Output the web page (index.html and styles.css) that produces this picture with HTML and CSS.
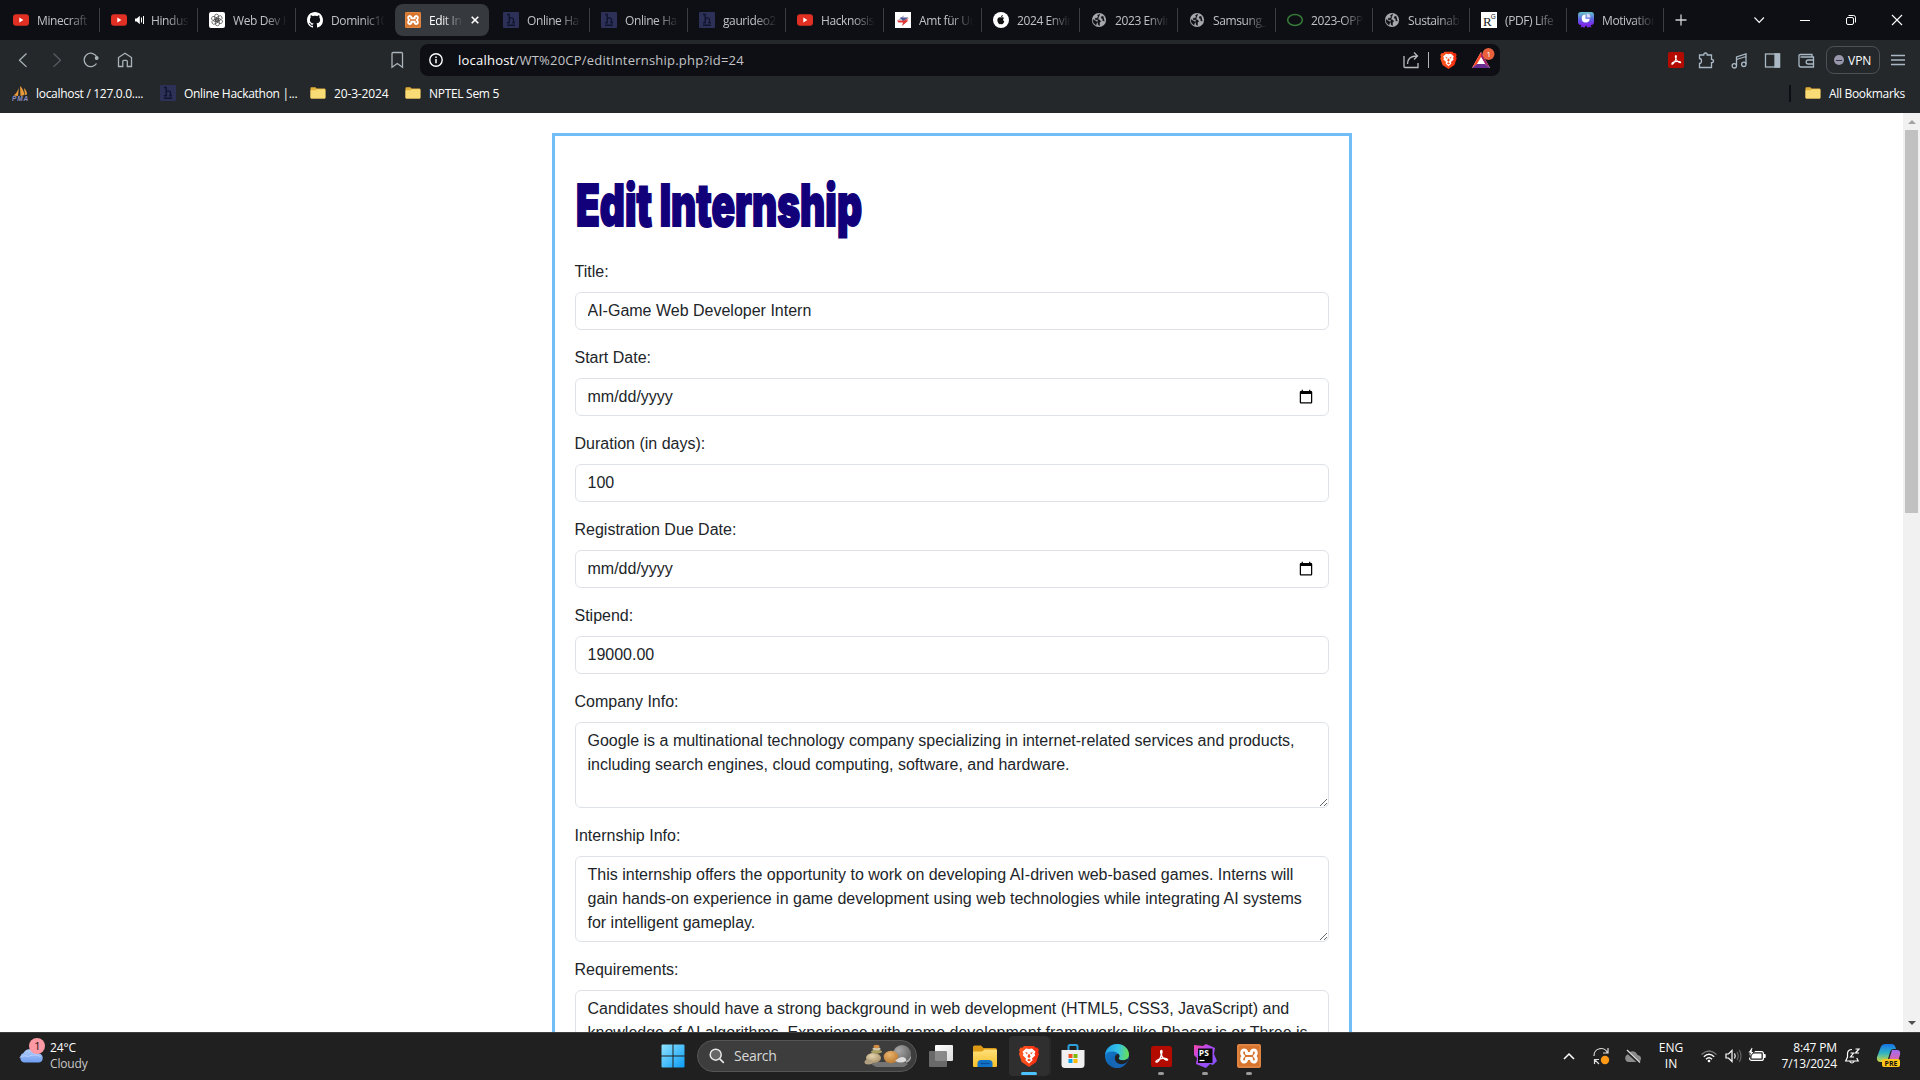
FILE: index.html
```
<!DOCTYPE html>
<html lang="en-US">
<head>
<meta charset="utf-8">
<title>Edit Internship</title>
<link rel="stylesheet" href="styles.css">
</head>
<body>
<svg class="defs" width="0" height="0">
  <defs>
    <linearGradient id="gWin" x1="0" y1="0" x2="1" y2="1"><stop offset="0" stop-color="#8fe3ff"/><stop offset="1" stop-color="#0a9bf5"/></linearGradient>
    <linearGradient id="gFold" x1="0" y1="0" x2="0" y2="1"><stop offset="0" stop-color="#ffe07a"/><stop offset="1" stop-color="#f6bf28"/></linearGradient>
    <linearGradient id="gEdge" x1="0" y1="0.2" x2="1" y2="0.3"><stop offset="0" stop-color="#1b9de2"/><stop offset=".55" stop-color="#35c1e8"/><stop offset="1" stop-color="#66df58"/></linearGradient>
    <linearGradient id="gEdge2" x1="0" y1="0" x2="1" y2="1"><stop offset="0" stop-color="#1683d4"/><stop offset="1" stop-color="#0c4a94"/></linearGradient>
    <linearGradient id="gPs" x1="0" y1="0" x2="1" y2="1"><stop offset="0" stop-color="#ff45a5"/><stop offset=".4" stop-color="#b04cf2"/><stop offset="1" stop-color="#7b52ff"/></linearGradient>
    <linearGradient id="gMot" x1="0" y1="0" x2="0" y2="1"><stop offset="0" stop-color="#68c5cb"/><stop offset=".6" stop-color="#5a5ce0"/><stop offset="1" stop-color="#8226ef"/></linearGradient>
    <linearGradient id="gCop1" x1="0" y1="0" x2="0" y2="1"><stop offset="0" stop-color="#1672e8"/><stop offset=".5" stop-color="#2fb4c4"/><stop offset="1" stop-color="#d8d936"/></linearGradient>
    <linearGradient id="gCop2" x1="0" y1="0" x2="0" y2="1"><stop offset="0" stop-color="#a16bf3"/><stop offset="1" stop-color="#f4638b"/></linearGradient>
    <linearGradient id="gCloud" x1="0" y1="0" x2="0" y2="1"><stop offset="0" stop-color="#b4cffa"/><stop offset="1" stop-color="#6f9df0"/></linearGradient>
    <linearGradient id="gTv" x1="0" y1="0" x2="1" y2="1"><stop offset="0" stop-color="#fff"/><stop offset="1" stop-color="#dcdcdc"/></linearGradient>
    <linearGradient id="gBrave" x1="0" y1="0" x2="1" y2="0"><stop offset="0" stop-color="#ff5a1f"/><stop offset="1" stop-color="#f4280f"/></linearGradient>
    <radialGradient id="gRock" cx=".4" cy=".3" r=".8"><stop offset="0" stop-color="#e4d3ae"/><stop offset="1" stop-color="#a28c63"/></radialGradient>
    <radialGradient id="gRock2" cx=".4" cy=".3" r=".8"><stop offset="0" stop-color="#e9b36b"/><stop offset="1" stop-color="#b5742d"/></radialGradient>
    <radialGradient id="gRock3" cx=".3" cy=".3" r=".8"><stop offset="0" stop-color="#a8a8a8"/><stop offset="1" stop-color="#626262"/></radialGradient>
  </defs>
  <symbol id="yt" viewBox="0 0 16 16"><rect x="0" y="2.2" width="16" height="11.6" rx="3" fill="#e13023"/><path d="M6.3 5.6v4.8L10.4 8z" fill="#fff"/></symbol>
  <symbol id="gpt" viewBox="0 0 16 16"><rect width="16" height="16" rx="2" fill="#fff"/><g fill="none" stroke="#333" stroke-width=".6"><rect x="5.600" y="2.200" width="4" height="7" rx="2"/><rect x="5.600" y="2.200" width="4" height="7" rx="2" transform="rotate(60 8 8)"/><rect x="5.600" y="2.200" width="4" height="7" rx="2" transform="rotate(120 8 8)"/><rect x="5.600" y="2.200" width="4" height="7" rx="2" transform="rotate(180 8 8)"/><rect x="5.600" y="2.200" width="4" height="7" rx="2" transform="rotate(240 8 8)"/><rect x="5.600" y="2.200" width="4" height="7" rx="2" transform="rotate(300 8 8)"/></g></symbol>
  <symbol id="gh" viewBox="0 0 16 16"><path fill="#fff" d="M8 0C3.58 0 0 3.58 0 8c0 3.54 2.29 6.53 5.47 7.59.4.07.55-.17.55-.38 0-.19-.01-.82-.01-1.49-2.01.37-2.53-.49-2.69-.94-.09-.23-.48-.94-.82-1.13-.28-.15-.68-.52-.01-.53.63-.01 1.08.58 1.23.82.72 1.21 1.87.87 2.33.66.07-.52.28-.87.51-1.07-1.78-.2-3.64-.89-3.64-3.95 0-.87.31-1.59.82-2.15-.08-.2-.36-1.02.08-2.12 0 0 .67-.21 2.2.82.64-.18 1.32-.27 2-.27s1.36.09 2 .27c1.53-1.04 2.2-.82 2.2-.82.44 1.1.16 1.92.08 2.12.51.56.82 1.27.82 2.15 0 3.07-1.87 3.75-3.65 3.95.29.25.54.73.54 1.48 0 1.07-.01 1.93-.01 2.2 0 .21.15.46.55.38A8.01 8.01 0 0 0 16 8c0-4.42-3.58-8-8-8z"/></symbol>
  <symbol id="xampp" viewBox="0 0 24 24"><rect width="24" height="24" rx="2" fill="#d8752f"/><rect x="1" y="1" width="22" height="22" rx="1" fill="none" stroke="#ec9a5c" stroke-width=".8"/><path d="M8 6.2C4.500 5 3.500 10 6.500 12 3.500 14 4.500 19 8 17.800c2 -.8 1.500-3.300 1.500-3.300h5s-.5 2.500 1.500 3.300c3.500 1.200 4.500-3.800 1.500-5.800 3-2 2-7-1.500-5.800-2 .8-1.500 3.300-1.500 3.300h-5s.5-2.500-1.500-3.300z" fill="none" stroke="#fff" stroke-width="2.900" stroke-linejoin="round"/></symbol>
  <symbol id="he" viewBox="0 0 16 16"><rect width="16" height="16" rx="1" fill="#2d3157"/><path d="M4 2.500h2.200V11M6.200 7c1-1.600 4.300-1.600 4.300.8V11M4 10.800h2.800M9.300 10.800H12M4 13.300h8" fill="none" stroke="#11142e" stroke-width="1.400"/></symbol>
  <symbol id="amt" viewBox="0 0 16 16"><rect width="16" height="16" fill="#fff"/><path d="M9.500 3 2.500 8.500 7 7z" fill="#8e8aa8"/><path d="M5 5.500h8.500L8 9.500z" fill="#4c5795"/><path d="M14 6 9 8.500H2l1.500 2H8L7 14l6.500-5.500h-2z" fill="#df3733"/></symbol>
  <symbol id="apple" viewBox="0 0 16 16"><circle cx="8" cy="8" r="8" fill="#fff"/><path d="M8.100 5.600c1.200-.7 2.400-.3 3 .5-1.400 1-1.200 2.800.2 3.500-.5 1.500-1.400 2.600-2.200 2.600-.5 0-.7-.3-1.200-.3s-.8.300-1.200.3C5.300 12.200 3.500 8.300 4.900 6.300c.8-1.100 2-1.200 3.200-.7zM8 5.100c0-1.100.7-2 1.800-2.200.1 1.200-.7 2.200-1.800 2.200z" fill="#111"/></symbol>
  <symbol id="globe" viewBox="0 0 16 16"><circle cx="8" cy="8" r="7.100" fill="#a5a8ac"/><path d="M9 2 6.500 3.500 7.500 5 6 6.200H4.300v1.500h4l1.500 1.600-1.300 1.200v3L7 12.500v-2L2 7.500c-.3 3 1.500 4.800 3.200 5.600M12.300 4.200l-2 .6v1.400l1.500.5v2l1.700.3" fill="#0f1016" stroke="#0f1016" stroke-width=".5"/></symbol>
  <symbol id="ring" viewBox="0 0 16 16"><ellipse cx="8" cy="8" rx="7.300" ry="5.400" fill="none" stroke="#377b38" stroke-width="1.500"/></symbol>
  <symbol id="rg" viewBox="0 0 16 16"><rect width="16" height="16" fill="#fff"/><text x="2" y="13.500" font-family="Liberation Serif" font-size="13" fill="#222">R</text><text x="9.800" y="6.700" font-family="Liberation Sans" font-size="6.500" fill="#222">G</text></symbol>
  <symbol id="mot" viewBox="0 0 16 16"><path d="M4 11h8l1.500 4.500-2.500-.7-1 1.200-2-2.500L6 16l-1-1.200-2.500.7z" fill="#7b2be8"/><rect width="16" height="13" rx="3" fill="url(#gMot)"/><path d="M7.500 2.500a4 4 0 1 0 4.200 4.200H7.500z" fill="#fff"/><path d="M8.700 1.600a4 4 0 0 1 3.800 3.900H8.700z" fill="#dcd7ff"/></symbol>
  <symbol id="folder" viewBox="0 0 16 16"><path d="M.5 3.200q0-.9.900-.9h4l1.200 1.300h8q.8 0 .8.800v8.200q0 .9-.8.900H1.400q-.9 0-.9-.9z" fill="#e2b13a"/><path d="M.5 5.300h5l1.300-1.100h7.800q.8 0 .8.800v7.600q0 .9-.8.900H1.400q-.9 0-.9-.9z" fill="#f9dc76"/></symbol>
  <symbol id="pma" viewBox="0 0 16 16"><path d="M7 2c-.5 3-3 7-5.500 8.500L6 11zM8 1l.5 10 4-1C12 6.500 10.500 3 8 1zM12 3l1 7 2-.5C15 7 14 5 12 3z" fill="#e89a3a"/><text x="0" y="15.700" font-family="Liberation Sans" font-weight="700" font-style="italic" font-size="6.500" textLength="16" fill="#8d8fc4">PMA</text></symbol>
  <symbol id="brave" viewBox="0 0 20 22"><path d="M5 1h10l1.500 1.700 1.800-.2L20 5l-.8 2L20 9l-2.700 8L10 22l-7.300-5L0 9l.8-2L0 5l1.700-2.500 1.800.2z" fill="url(#gBrave)"/><path d="m10 4 3-.5 3.500 3.300-1 2 .8 1.500-3.300 3.200.6 1.700L10 18.500l-3.600-3.300.6-1.700-3.300-3.200.8-1.500-1-2L7 3.500z" fill="#fff"/><path d="m6 7 2.700.8-.8 1.600zm8 0-2.700.8.800 1.600zM9.200 9.200h1.600l.7 2.800-1.500 1-1.500-1zM8 15l2-1.200L12 15l-2 1.500z" fill="#f24a1c"/></symbol>
  <symbol id="pdf" viewBox="0 0 20 20"><rect width="20" height="20" rx="2.500" fill="#b30b00" stroke="none"/><path d="M10 4.300c-1.500 0-.8 3 .5 5.500 1.200 2.200 3.800 4 5 3.600 1.300-.7-1.300-2-4.300-1.700-3 .3-6.200 1.800-6.500 3-.2 1.200 1.800.9 3.300-1.800C9.500 10.300 11.300 4.500 10 4.300z" fill="none" stroke="#fff" stroke-width="1.300"/></symbol>
</svg>

<header class="browser">
  <nav class="tabs">
    <div class="tab"><svg class="fav"><use href="#yt"/></svg><span class="tab-name">Minecraft</span></div>
    <div class="tab"><svg class="fav"><use href="#yt"/></svg><svg class="sound" viewBox="0 0 10 10"><path d="M0 3.500h1.800L4.800.8v8.400L1.800 6.500H0z" fill="#fff"/><path d="M6.500 2.500v5M8.500 1v8" stroke="#fff" fill="none"/></svg><span class="tab-name">Hindus</span></div>
    <div class="tab"><svg class="fav"><use href="#gpt"/></svg><span class="tab-name">Web Dev H</span></div>
    <div class="tab plain"><svg class="fav"><use href="#gh"/></svg><span class="tab-name">Dominic10</span></div>
    <div class="tab active"><svg class="fav"><use href="#xampp"/></svg><span class="tab-name">Edit In</span><svg class="close" viewBox="0 0 8 8"><path d="m.7.7 6.600 6.600M7.300.7.700 7.300" stroke="#fff" stroke-width="1.600"/></svg></div>
    <div class="tab"><svg class="fav"><use href="#he"/></svg><span class="tab-name">Online Hac</span></div>
    <div class="tab"><svg class="fav"><use href="#he"/></svg><span class="tab-name">Online Hac</span></div>
    <div class="tab"><svg class="fav"><use href="#he"/></svg><span class="tab-name">gaurideo2</span></div>
    <div class="tab"><svg class="fav"><use href="#yt"/></svg><span class="tab-name">Hacknosis</span></div>
    <div class="tab"><svg class="fav"><use href="#amt"/></svg><span class="tab-name">Amt für Um</span></div>
    <div class="tab"><svg class="fav"><use href="#apple"/></svg><span class="tab-name">2024 Envir</span></div>
    <div class="tab"><svg class="fav"><use href="#globe"/></svg><span class="tab-name">2023 Envir</span></div>
    <div class="tab"><svg class="fav"><use href="#globe"/></svg><span class="tab-name">Samsung_</span></div>
    <div class="tab narrow"><svg class="fav"><use href="#ring"/></svg><span class="tab-name">2023-OPP</span></div>
    <div class="tab narrow"><svg class="fav"><use href="#globe"/></svg><span class="tab-name">Sustainabi</span></div>
    <div class="tab narrow"><svg class="fav"><use href="#rg"/></svg><span class="tab-name">(PDF) Life</span></div>
    <div class="tab narrow"><svg class="fav"><use href="#mot"/></svg><span class="tab-name">Motivation</span></div>
    <svg class="new-tab" viewBox="0 0 12 12"><path d="M6 .5v11M.5 6h11" stroke="#d0d1d3" stroke-width="1.300"/></svg>
    <div class="window-controls">
      <svg width="46" height="40" fill="none" stroke="#fff" stroke-width="1.100"><path d="m18.500 17.500 4.700 5 4.700-5"/></svg>
      <svg width="46" height="40" fill="none" stroke="#fff"><path d="M18 20.500h10"/></svg>
      <svg width="46" height="40" fill="none" stroke="#fff"><rect x="18.500" y="17.500" width="7" height="7" rx="1.500"/><path d="M20.500 15.500h5q2 0 2 2v5"/></svg>
      <svg width="46" height="40" fill="none" stroke="#fff" stroke-width="1.100"><path d="m18 15 10 10M28 15 18 25"/></svg>
    </div>
  </nav>

  <div class="toolbar">
    <div class="nav-buttons">
      <svg viewBox="0 0 34 20"><path d="m20.500 3.500-7 6.700 7 6.700"/></svg>
      <svg class="dim" viewBox="0 0 34 20"><path d="m13.500 3.500 7 6.700-7 6.700"/></svg>
      <svg viewBox="0 0 34 20"><path d="M22.500 13.500A6.700 6.700 0 1 1 22.600 6.500"/><circle cx="22.700" cy="8" r="1.300" fill="#a9b3b9"/></svg>
      <svg viewBox="0 0 34 20"><path d="M10.500 16.500v-9L17 3.200l6.500 4.300v9h-4.200v-5.200q0-1-1-1h-2.500q-1 0-1 1v5.200z"/></svg>
      <svg class="save" viewBox="0 0 34 20"><path d="M12 3.500q0-1 1-1h8.500q1 0 1 1v13.800l-5.200-3.800L12 17.300z"/></svg>
    </div>
    <div class="address">
      <svg class="info" viewBox="0 0 16 16"><circle cx="8" cy="8" r="6.200" fill="none" stroke="#fff" stroke-width="1.400"/><path d="M8 7v4.300M8 4.400v1.500" stroke="#fff" stroke-width="1.500"/></svg>
      <span class="url"><b>localhost</b>/WT%20CP/editInternship.php?id=24</span>
      <svg class="share" viewBox="0 0 17 18" fill="none" stroke="#b9bbbd" stroke-width="1.300"><path d="M1 5v10.500q0 1 1 1h13V12M4.500 13c0-5 3-8 9.500-8M11 1.500 14.500 5 11 8.500"/></svg>
      <i class="divider"></i>
      <svg class="shield"><use href="#brave"/></svg>
      <svg class="bat" viewBox="0 0 26 24"><path d="M10 4 1 20h18z" fill="#fff"/><path d="M10 4 1 20l9-7z" fill="#ff4724"/><path d="m10 4 9 16-5-4-4-7z" fill="#9e1f63"/><path d="M1 20h18l-5-4H6z" fill="#662d91"/><path d="m10 9 4 7H6z" fill="#fff"/><circle cx="17.500" cy="6" r="6" fill="#e8613c"/><text x="15.500" y="9" font-family="Open Sans" font-size="8" fill="#fff">1</text></svg>
    </div>
    <div class="tools">
      <svg class="acro" viewBox="0 0 20 20"><use href="#pdf"/></svg>
      <svg class="t2" viewBox="0 0 17 17"><path d="M1.500 3h4.300q0-2 1.700-2t1.700 2h4.300v4.300q2 0 2 1.700t-2 1.700V15.500h-12v-4q2 0 2-2.500t-2-2.500z"/></svg>
      <svg class="t3" viewBox="0 0 17 17"><path d="M5.500 13.500V5l9.500-3v10M5.500 7.500 15 4.500"/><circle cx="3.300" cy="13.800" r="2.200"/><circle cx="12.800" cy="12.300" r="2.200"/></svg>
      <svg class="t4" viewBox="0 0 17 17"><rect x="1.500" y="2" width="14" height="13"/><path d="M11 2h4.500v13H11z" fill="#a9b8c4"/></svg>
      <svg class="t5" viewBox="0 0 17 17"><path d="M14 5V2.500H2.500q-1.500 0-1.500 1V13q0 2 2 2h12.500V5H2.500M15.500 8h-5.300q-2 0-2 2t2 2h5.300"/></svg>
      <div class="vpn"><i></i><span>VPN</span></div>
      <svg class="t6" viewBox="0 0 14 14"><path d="M0 2.500h14M0 7h14M0 11.500h14"/></svg>
    </div>
  </div>

  <div class="bookmarks">
    <div class="bm b1"><svg class="fav"><use href="#pma"/></svg><span>localhost / 127.0.0....</span></div>
    <div class="bm b2"><svg class="fav"><use href="#he"/></svg><span>Online Hackathon |...</span></div>
    <div class="bm b3"><svg class="fav"><use href="#folder"/></svg><span>20-3-2024</span></div>
    <div class="bm b4"><svg class="fav"><use href="#folder"/></svg><span>NPTEL Sem 5</span></div>
    <div class="bm all"><svg class="fav"><use href="#folder"/></svg><span>All Bookmarks</span></div>
  </div>
</header>

<div class="viewport">
  <main class="page">
    <form class="form-card">
      <h1 class="heading"><svg width="320" height="72"><text x="1" y="46" textLength="286" lengthAdjust="spacingAndGlyphs">Edit Internship</text></svg></h1>
      <label>Title:</label>
      <input class="field" type="text" value="AI-Game Web Developer Intern">
      <label>Start Date:</label>
      <input class="field" type="date">
      <label>Duration (in days):</label>
      <input class="field" type="text" value="100">
      <label>Registration Due Date:</label>
      <input class="field" type="date">
      <label>Stipend:</label>
      <input class="field" type="text" value="19000.00">
      <label>Company Info:</label>
      <textarea class="field area">Google is a multinational technology company specializing in internet-related services and products, including search engines, cloud computing, software, and hardware.</textarea>
      <label>Internship Info:</label>
      <textarea class="field area">This internship offers the opportunity to work on developing AI-driven web-based games. Interns will gain hands-on experience in game development using web technologies while integrating AI systems for intelligent gameplay.</textarea>
      <label>Requirements:</label>
      <textarea class="field area">Candidates should have a strong background in web development (HTML5, CSS3, JavaScript) and knowledge of AI algorithms. Experience with game development frameworks like Phaser.js or Three.js is preferred.</textarea>
    </form>
  </main>
  <div class="scrollbar">
    <i class="arrow up"></i>
    <i class="thumb"></i>
    <i class="arrow down"></i>
  </div>
</div>

<footer class="taskbar">
  <div class="weather">
    <svg width="30" height="28" viewBox="0 0 30 28"><path d="M7 24.500a5 5 0 0 1-.5-9.500C8 12 11 10.500 14 11.500c3-1 7 .5 8 4 5 .5 5 8.500 0 9z" fill="url(#gCloud)"/><path d="M2.500 19.500c3-2 6-2 9-1 3-2 8-2 12 0" fill="none" stroke="#d3e3ff" opacity=".6"/><circle cx="20" cy="8" r="8" fill="#ff99a4"/><text x="17.300" y="12" font-family="Open Sans" font-size="11" fill="#111">1</text></svg>
    <div class="lines"><span>24°C</span><span class="muted">Cloudy</span></div>
  </div>
  <div class="apps">
    <div class="app"><svg width="24" height="24" viewBox="0 0 24 24"><path d="M.5 1.500q0-1 1-1h10v11H.5zM12.500.5h10q1 0 1 1v10h-11zM.5 12.500h11v11h-10q-1 0-1-1zM12.500 12.500h11v10q0 1-1 1h-10z" fill="url(#gWin)"/></svg></div>
    <div class="search">
      <svg width="16" height="16" viewBox="0 0 16 16"><circle cx="6.700" cy="6.700" r="5.500" fill="#666" stroke="#e8e8e8" stroke-width="1.500"/><path d="m10.800 10.800 4 4" stroke="#e8e8e8" stroke-width="1.700"/></svg>
      <span>Search</span>
      <svg class="stones" width="50" height="24" viewBox="0 0 50 24"><path d="M4 18h36l4 2-4 3H12z" fill="#747474"/><ellipse cx="38" cy="10" rx="9" ry="9" fill="url(#gRock3)"/><ellipse cx="27" cy="13" rx="7.300" ry="6.200" fill="url(#gRock2)"/><ellipse cx="9.500" cy="14" rx="7.500" ry="5" fill="url(#gRock)"/><ellipse cx="4.500" cy="18" rx="4" ry="2.500" fill="#b09e80"/><ellipse cx="12.500" cy="7.700" rx="5.500" ry="2" fill="#aaa064"/><ellipse cx="12.500" cy="4.800" rx="4" ry="1.500" fill="#cfc5a9"/><ellipse cx="12.500" cy="2.500" rx="3" ry="1.700" fill="#d28b40"/><path d="M31 17q4-4 8-4 4 1 3 4-5 3-11 0z" fill="#ddd"/><path d="M42 17q4-2 5-6 1 6-5 8z" fill="#aaa"/></svg>
    </div>
    <div class="app"><svg width="24" height="24" viewBox="0 0 24 24"><rect x="6" y="1" width="18" height="16" rx="1" fill="url(#gTv)"/><rect x="0" y="7" width="18" height="16" rx="1" fill="#777" opacity=".85"/></svg></div>
    <div class="app"><svg width="24" height="24" viewBox="0 0 24 24"><path d="M0 3q0-1.500 1.500-1.500H8L10.500 4H22q2 0 2 2v5H0z" fill="#dd9a14"/><path d="M0 7.500h9l2.500-2H23q1 0 1 1V22q0 1-1 1H1q-1 0-1-1z" fill="url(#gFold)"/><path d="M4.500 23v-3.500Q4.500 16 8 16h8q3.500 0 3.500 3.500V23z" fill="#1272c6"/><path d="M7.500 19.500h9" stroke="#0a4e97" stroke-width="1.300"/></svg></div>
    <div class="app current"><svg width="20" height="24" viewBox="0 0 20 22"><use href="#brave"/></svg><i class="mark"></i></div>
    <div class="app"><svg width="24" height="24" viewBox="0 0 24 24"><path d="M7.500 7V2.500q0-1.500 1.500-1.500h6q1.500 0 1.500 1.500V7" fill="none" stroke="#2da0dc" stroke-width="2"/><path d="M.5 6h23v14.500q0 3.500-3.500 3.500H4q-3.500 0-3.500-3.500z" fill="#f0f0f0"/><path d="M7.500 10h4v4h-4z" fill="#f25022"/><path d="M12.500 10h4v4h-4z" fill="#7fba00"/><path d="M7.500 15h4v4h-4z" fill="#00a4ef"/><path d="M12.500 15h4v4h-4z" fill="#ffb900"/></svg></div>
    <div class="app"><svg width="24" height="24" viewBox="0 0 24 24"><circle cx="12" cy="12" r="12" fill="url(#gEdge2)"/><path d="M0 11C1 4 6 0 12 0c7 0 12 5 12 10.500 0 4-3 5.800-6.500 5.800-3 0-4.300-1.300-3.700-2.300.8-1.200.9-2.200.3-3.300C12.800 8 4 5 0 11z" fill="url(#gEdge)"/><path d="M14 10.500c.8 1.500.5 2.500-.2 3.500-.6 1 .7 2.300 3.700 2.300 2 0 3.500-.5 4.800-1.500l.7 2c-2 3-6 4-9 3-4-1.500-5.500-6-3-9 1.200-1 2.500-1 3-.3z" fill="#202020"/><path d="M10.500 11c-2 3-1 7.500 3 9 2.500.8 5.500.3 7.500-1-3 5-8 5.500-11 4.700C4 21 6 13 10.500 11z" fill="#1766b5"/></svg></div>
    <div class="app"><svg width="21" height="21" viewBox="0 0 20 20"><use href="#pdf"/></svg><i class="mark idle"></i></div>
    <div class="app"><svg width="24" height="24" viewBox="0 0 24 24"><path d="m1 1 9 1 3-2 9 4-1 6 3 7-4 4-3-1-4 4-10-4 1-6-3-3z" fill="url(#gPs)"/><path d="M5 4.500h14.500V19H5z" fill="#0a0a0a"/><text x="5.800" y="12.200" font-family="Open Sans" font-weight="700" font-size="8.500" fill="#fff">PS</text><path d="M6.500 16.500h5" stroke="#fff" stroke-width="1.200"/></svg><i class="mark idle"></i></div>
    <div class="app"><svg width="24" height="24"><use href="#xampp"/></svg><i class="mark idle"></i></div>
  </div>
  <div class="tray">
    <svg width="32" height="24" fill="none" stroke="#fff" stroke-width="1.500"><path d="m11 15 5-5 5 5"/></svg>
    <svg width="32" height="24" fill="none" stroke="#ddd" stroke-width="1.200"><path d="M9 12a7 7 0 0 1 13.500-3M23 4v5h-5M14 20l-4.500-4.500M9.500 20v-4.500H14"/><circle cx="20" cy="16" r="4.200" fill="#ff9a17" stroke="none"/></svg>
    <svg width="32" height="24"><path d="M11 18a4 4 0 0 1-.5-7.500C12 7 18 5.500 20.500 11c5 .5 4.500 7 0 7z" fill="#8b8b8b"/><path d="m9.500 7 13 12" stroke="#202020" stroke-width="3"/><path d="m10 6 13 12.500" stroke="#ddd" stroke-width="1.200"/></svg>
    <div class="lang"><span>ENG</span><span>IN</span></div>
    <svg width="24" height="24" fill="none" stroke="#fff" stroke-width="1.300"><path d="M4.500 10.500q7.500-7 15 0" stroke="#777"/><path d="M6.800 12.800q5.200-5 10.400 0M9 15.200q3-3 6 0"/><circle cx="12" cy="17" r="1.300" fill="#fff" stroke="none"/></svg>
    <svg width="24" height="24" fill="none" stroke="#fff" stroke-width="1.200"><path d="M5 10h2.500L11 6.500v11L7.500 14H5zM13.500 9.500q1.500 2.500 0 5"/><path d="M16 8q2.500 4 0 8M18.300 6q3.500 6 0 12" stroke="#666"/></svg>
    <svg width="24" height="24"><rect x="4.600" y="7.600" width="13.800" height="8.800" rx="2" fill="none" stroke="#fff" stroke-width="1.200"/><rect x="6.500" y="9.500" width="10" height="5" fill="#fff"/><path d="M19 10.500h1.200v3H19z" fill="#fff" stroke="#fff"/><path d="M6.500 3.500 2.800 9h2.400l-1 4.500L9.500 7.500H7l1.200-4z" fill="#fff" stroke="#202020" stroke-width="1"/></svg>
    <div class="clock"><span>8:47 PM</span><span>7/13/2024</span></div>
    <svg width="32" height="24" fill="none" stroke="#fff" stroke-width="1.200"><path d="M15 5.500c-3 0-4.500 2-4.500 4.500v3L8.700 17h12.500l-1.500-3M12.700 17.500q2.200 3 4.500 0"/><path d="M13.500 9h3l-3 4H17M18.500 5H22l-3.500 4H22"/></svg>
    <svg width="38" height="28" viewBox="1 0 38 28"><path d="M13 4.500Q14 2 17 2h7q2.500 0 3.200 2.500L28 7h-3q-2 0-2.800 2.500L20 17q-1 3-4 3h-3q-5 0-4-5z" fill="url(#gCop1)"/><path d="M24 8h5q4 0 3 5l-2 6q-1 3-4 3h-8q2-1 3-4z" fill="url(#gCop2)"/><rect x="14" y="17" width="18" height="8" rx="2" fill="#ffc61a"/><text x="16.500" y="23.700" font-family="Open Sans" font-weight="700" font-size="7" textLength="13" fill="#111">PRE</text></svg>
  </div>
</footer>
</body>
</html>
```
FILE: styles.css
```
* { box-sizing: border-box; }
html, body { height: 100%; }
body {
  margin: 0;
  display: flex;
  flex-direction: column;
  overflow: hidden;
  background: #fff;
  font-family: "Open Sans", "Noto Sans", sans-serif;
  font-size: 12px;
}
svg { display: block; flex: none; }
.defs { position: absolute; }

/* Browser chrome */
.browser { flex: none; height: 113px; background: #24282b; color: #fff; }
.tabs {
  height: 40px;
  display: flex;
  align-items: center;
  padding-left: 2px;
  background: #0e0f15;
}
.tab {
  width: 98px;
  height: 24px;
  flex: none;
  display: flex;
  align-items: center;
  gap: 8px;
  padding: 0 8px 0 11px;
  border-right: 1px solid #3b3d42;
  color: #c0c1c4;
}
.tab.plain { border-color: transparent; }
.tab.narrow { width: 97px; }
.tab.active {
  width: 94px;
  height: 32px;
  margin: 0 2px 0 1px;
  padding: 0 10px;
  border: 0;
  border-radius: 8px;
  background: #363a3f;
  color: #fff;
}
.tab.active + .tab { width: 99px; padding-left: 12px; }
.fav { width: 16px; height: 16px; }
.tab-name {
  flex: 1;
  min-width: 0;
  overflow: hidden;
  white-space: nowrap;
  letter-spacing: -0.4px;
  mask-image: linear-gradient(to left, transparent 0, #000 22px);
}
.sound { width: 10px; height: 10px; margin-right: -2px; }
.close { width: 8px; height: 8px; }
.new-tab { width: 12px; height: 12px; margin-left: 11px; }
.window-controls { display: flex; margin-left: auto; }

.toolbar {
  height: 40px;
  display: grid;
  grid-template-columns: 420px 1080px 1fr;
  align-items: center;
}
.nav-buttons { display: flex; padding: 0 6px; }
.nav-buttons svg {
  width: 34px;
  height: 20px;
  fill: none;
  stroke: #a9b3b9;
  stroke-width: 1.3;
}
.nav-buttons .dim { stroke: #575d62; }
.nav-buttons .save { margin-left: auto; }
.address {
  height: 32px;
  display: flex;
  align-items: center;
  padding: 0 12px 0 8px;
  border-radius: 8px;
  background: #0e0f15;
}
.info { width: 16px; height: 16px; }
.url { margin-left: 14px; font-size: 13px; letter-spacing: 0.22px; color: #c2c4c6; }
.url b { font-weight: 400; color: #fff; }
.share { width: 17px; height: 18px; margin-left: auto; }
.divider { width: 1px; height: 16px; margin: 0 11px 0 8px; background: #b5b5b8; }
.shield { width: 17px; height: 18px; }
.bat { width: 26px; height: 24px; margin-left: 14px; margin-right: -9px; }
.tools { display: flex; align-items: center; height: 40px; padding-left: 168px; }
.tools svg { width: 17px; height: 17px; fill: none; stroke: #a9b8c4; stroke-width: 1.3; }
.tools .acro { width: 16px; height: 16px; }
.t2 { margin-left: 14px; }
.t3, .t4 { margin-left: 16px; }
.t5 { margin-left: 17px; }
.vpn {
  width: 54px;
  height: 28px;
  margin-left: 11px;
  display: flex;
  align-items: center;
  gap: 4px;
  padding-left: 7px;
  border: 1px solid #4c5156;
  border-radius: 8px;
}
.vpn i {
  width: 10px;
  height: 10px;
  border-radius: 50%;
  background: linear-gradient(#33364a, #33364a) center / 6px 1px no-repeat #9896aa;
}
.tools .t6 { width: 14px; height: 14px; margin-left: 11px; }

.bookmarks { height: 26px; display: flex; align-items: center; padding: 0 15px 0 12px; }
.bm { display: flex; align-items: center; gap: 8px; white-space: nowrap; letter-spacing: -0.3px; }
.b1 { width: 148px; }
.b2 { width: 150px; }
.b3 { width: 95px; letter-spacing: -0.15px; }
.all { margin-left: auto; padding-left: 14px; border-left: 2px solid #0e0f15; }

/* Page */
.viewport { flex: 1; min-height: 0; display: flex; overflow: hidden; }
.page {
  flex: 1;
  display: flex;
  justify-content: center;
  align-items: flex-start;
  padding-top: 20px;
  font-family: "Liberation Sans", Arial, sans-serif;
  font-size: 16px;
  line-height: 24px;
  color: #212529;
}
.form-card { width: 800px; padding: 44px 20px; border: 3px solid #70bdf7; }
.heading { height: 72px; margin: 0 0 8px; }
.heading text {
  font-family: "Inter", sans-serif;
  font-size: 58px;
  font-weight: 900;
  fill: #12007a;
  stroke: #12007a;
  stroke-width: 2px;
}
label { display: block; margin-bottom: 8px; }
.field {
  display: block;
  width: 100%;
  height: 38px;
  margin: 0 0 16px;
  padding: 6px 12px;
  border: 1px solid #dee2e6;
  border-radius: 6px;
  background: #fff;
  color: #212529;
  font: inherit;
}
.field::-webkit-datetime-edit-month-field,
.field::-webkit-datetime-edit-day-field,
.field::-webkit-datetime-edit-year-field { padding: 0; }
.area { height: 86px; overflow: hidden; resize: vertical; }

.scrollbar {
  width: 17px;
  display: flex;
  flex-direction: column;
  align-items: center;
  background: #f1f1f1;
}
.arrow { border: 4px solid transparent; }
.up { margin-top: 3px; border-bottom-color: #a3a3a3; }
.down { margin: auto 0 3px; border-top-color: #505050; }
.thumb { width: 13px; height: 383px; margin-top: 6px; background: #c1c1c1; }

/* Taskbar */
.taskbar {
  flex: none;
  height: 48px;
  display: grid;
  grid-template-columns: 651px 1fr 367px;
  background: #202020;
  box-shadow: inset 0 1px #3c3c3c;
  color: #fff;
  line-height: 16px;
}
.weather { display: flex; align-items: center; padding-left: 17px; gap: 3px; letter-spacing: -0.15px; }
.weather svg { margin-top: -9px; }
.lines, .lang, .clock { display: flex; flex-direction: column; }
.lines .muted { color: #c8c8c8; }
.apps { display: flex; align-items: center; }
.app {
  position: relative;
  width: 44px;
  height: 48px;
  display: flex;
  align-items: center;
  justify-content: center;
}
.current { width: 40px; height: 40px; margin: 0 2px; border-radius: 4px; background: #2f2f2f; box-shadow: 3px 0 0 -1px #292929; }
.mark {
  position: absolute;
  bottom: 1px;
  width: 16px;
  height: 3px;
  border-radius: 2px;
  background: #4cc2ff;
}
.mark.idle { bottom: 5px; width: 6px; background: #9a9a9a; }
.search {
  width: 220px;
  height: 32px;
  margin: 0 2px;
  display: flex;
  align-items: center;
  gap: 9px;
  padding: 0 2px 0 11px;
  border: 1px solid #555;
  border-radius: 16px;
  background: #3d3d3d;
  color: #d8d8d8;
  font-size: 14px;
  letter-spacing: -0.3px;
}
.stones { margin-left: auto; }
.tray { display: flex; align-items: center; }
.lang { width: 44px; margin-right: 4px; align-items: center; }
.clock { width: 68px; align-items: flex-end; white-space: nowrap; letter-spacing: -0.15px; }
```
